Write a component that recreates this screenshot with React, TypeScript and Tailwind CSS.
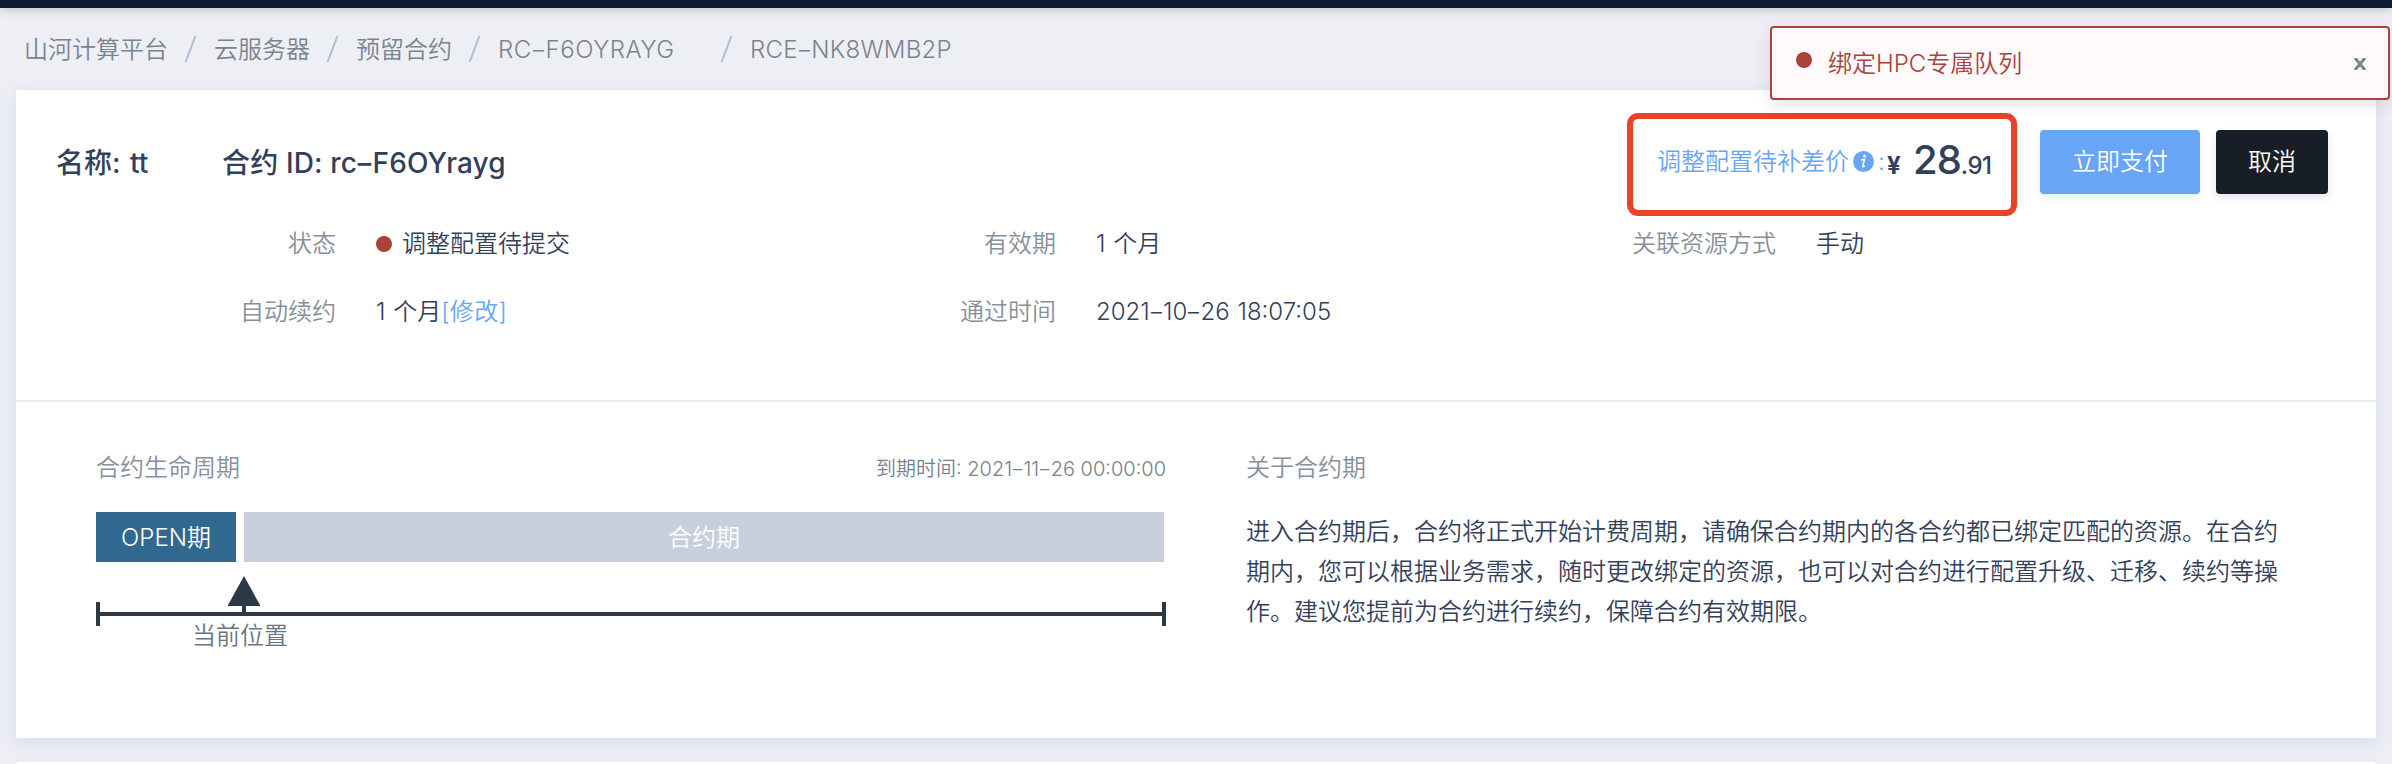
import { Fragment, type ReactNode } from 'react';

const crumbs = ['山河计算平台', '云服务器', '预留合约', 'RC-F6OYRAYG'];

/** Sets hyphens inside codes and dates as wide dashes. */
function Code({ text }: { text: string }) {
  return (
    <>
      {text.split('-').map((part, i) => (
        <Fragment key={i}>
          {i > 0 && <span className="mx-[1.2px] inline-block scale-x-150">-</span>}
          {part}
        </Fragment>
      ))}
    </>
  );
}

function Separator() {
  return (
    <svg className="h-[26px] w-[14px] shrink-0" viewBox="0 0 14 26" fill="none">
      <path d="M1.5 26 L11.5 0" stroke="#abbfd6" strokeWidth="2" />
    </svg>
  );
}

function Breadcrumb() {
  return (
    <nav className="flex h-[82px] items-center pl-6 text-[#79848f]">
      {crumbs.map((text, i) => (
        <div key={text} className="flex items-center">
          <span className={i === 3 ? 'w-[222px] pt-[2px] tracking-[0.55px]' : 'pt-[2px]'}>
            <Code text={text} />
          </span>
          <span className={i === 3 ? 'flex pr-4' : 'flex pr-4 pl-4'}>
            <Separator />
          </span>
        </div>
      ))}
      <span className="pt-[2px] tracking-[0.25px]">
        <Code text="RCE-NK8WMB2P" />
      </span>
    </nav>
  );
}

function Field({ label, children }: { label: string; children: ReactNode }) {
  return (
    <div className="flex h-[68px] w-[720px] items-center">
      <span className="w-80 text-right text-[#85909b]">{label}</span>
      <span className="ml-10 flex items-center whitespace-pre [word-spacing:1px]">{children}</span>
    </div>
  );
}

function InfoIcon() {
  return (
    <svg className="mr-[3px] ml-[4px] size-[21px]" viewBox="0 0 21 21">
      <circle cx="10.5" cy="10.5" r="10.5" fill="#68a5f6" />
      <circle cx="11.6" cy="5" r="1.5" fill="#fff" />
      <path d="M8.2 8.8 L11.4 8.4 L9.8 14.6 Q9.5 16.6 12 14.9" fill="none" stroke="#fff" strokeWidth="1.7" />
    </svg>
  );
}

function Header() {
  return (
    <header className="flex h-[120px] items-start justify-between pr-12 pl-10">
      <h1 className="flex pt-[53px] text-[28px] leading-10 font-medium whitespace-pre">
        <span className="w-[166px] [word-spacing:2px]">名称: tt</span>
        <span className="tracking-[0.15px]">
          合约 ID: <Code text="rc-F6OYrayg" />
        </span>
      </h1>
      <div className="flex items-start">
        <div className="mt-[23px] mr-[23px] flex h-[103px] w-[390px] items-center rounded-[11px] border-[6px] border-[#ea4226] pb-[6px] pl-6 whitespace-pre">
          <span className="text-[#68a5f6]">调整配置待补差价</span>
          <InfoIcon />
          <span className="w-[10px] pl-px text-[#68a5f6]">:</span>
          <span className="flex items-baseline pt-px font-medium">
            <span className="w-[26px] font-bold">¥</span>
            <span className="text-[40px] leading-none tracking-[-1px]">28</span>
            <span className="tracking-[-0.5px]">.91</span>
          </span>
        </div>
        <button className="mt-10 h-16 w-40 rounded bg-[#68a5f6] text-white shadow-[0_4px_8px_rgba(60,160,130,0.12)]">立即支付</button>
        <button className="mt-10 ml-4 h-16 w-28 rounded bg-[#171e27] text-white shadow-[0_4px_8px_rgba(35,45,65,0.12)]">取消</button>
      </div>
    </header>
  );
}

function Details() {
  return (
    <section className="flex h-[192px] flex-wrap content-start border-b-2 border-[#e7ecf1]">
      <Field label="状态">
        <i className="mr-[10px] size-4 rounded-full bg-[#ad413b]" />
        调整配置待提交
      </Field>
      <Field label="有效期">1 个月</Field>
      <Field label="关联资源方式">手动</Field>
      <Field label="自动续约">
        1 个月<span className="tracking-[0.3px] text-[#68a5f6]">[修改]</span>
      </Field>
      <Field label="通过时间">
        <span>
          <Code text="2021-10-26 18:07:05" />
        </span>
      </Field>
    </section>
  );
}

function Timeline() {
  return (
    <svg className="block h-[50px] w-[1070px]" viewBox="0 0 1070 50" fill="#2c3a48">
      <path d="M148 0 L164.5 30 H131.5 Z" />
      <rect x="146" y="29" width="4" height="9" />
      <rect x="0" y="36" width="1070" height="4" />
      <rect x="0" y="26" width="4" height="24" />
      <rect x="1066" y="26" width="4" height="24" />
    </svg>
  );
}

function Lifecycle() {
  return (
    <section className="flex pl-20">
      <div className="w-[1070px]">
        <div className="flex h-[110px] items-center justify-between pt-[22px] text-[#85909b]">
          <span>合约生命周期</span>
          <span className="pt-[2px] text-xl text-[#76818c]">
            到期时间: <Code text="2021-11-26 00:00:00" />
          </span>
        </div>
        <div className="flex h-[50px] gap-2 pr-[2px] text-center leading-[52px] text-white">
          <div className="w-[140px] bg-[#316890]">OPEN期</div>
          <div className="flex-1 bg-[#c8cfdc]">合约期</div>
        </div>
        <div className="pt-[14px]">
          <Timeline />
        </div>
        <div className="mt-[-10px] pl-24 leading-10 text-[#687583]">当前位置</div>
      </div>
      <div className="ml-20 w-[1040px]">
        <h2 className="flex h-[110px] items-center pt-[22px] text-[#85909b]">关于合约期</h2>
        <p className="leading-10">
          进入合约期后，合约将正式开始计费周期，请确保合约期内的各合约都已绑定匹配的资源。在合约
          <br />
          期内，您可以根据业务需求，随时更改绑定的资源，也可以对合约进行配置升级、迁移、续约等操
          <br />
          作。建议您提前为合约进行续约，保障合约有效期限。
        </p>
      </div>
    </section>
  );
}

function Notice() {
  return (
    <div role="alert" className="absolute top-[26px] right-[2px] flex h-[74px] w-[620px] items-center rounded border-2 border-[#ad413b] bg-[#fefafb] pr-[22px] pl-6 text-[#ad413b] shadow-[0_4px_16px_rgba(50,60,90,0.14)]">
      <i className="mr-4 mb-[6px] size-4 rounded-full bg-[#ad413b]" />
      <span className="flex-1 pt-[2px]">绑定HPC专属队列</span>
      <svg className="mt-[2px] size-3 text-[#7b8893]" viewBox="0 0 12 12" fill="none" stroke="currentColor" strokeWidth="3">
        <path d="M1 0 L11 12 M11 0 L1 12" />
      </svg>
    </div>
  );
}

export default function App() {
  return (
    <div className="relative h-[764px] w-[2392px] overflow-hidden bg-[#eeeff5] font-['Inter','Noto_Sans_CJK_SC',sans-serif] text-[24px] font-[350] text-[#343f5b]">
      <div className="h-2 bg-[#0f1c35] shadow-[0_2px_10px_rgba(0,0,0,0.2)]" />
      <Breadcrumb />
      <main className="mx-4 h-[648px] bg-white shadow-[0_4px_16px_rgba(60,110,170,0.15)]">
        <Header />
        <Details />
        <Lifecycle />
      </main>
      <div className="mx-4 mt-6 h-10 rounded bg-white shadow-[0_2px_8px_rgba(60,110,170,0.08)]" />
      <Notice />
    </div>
  );
}
